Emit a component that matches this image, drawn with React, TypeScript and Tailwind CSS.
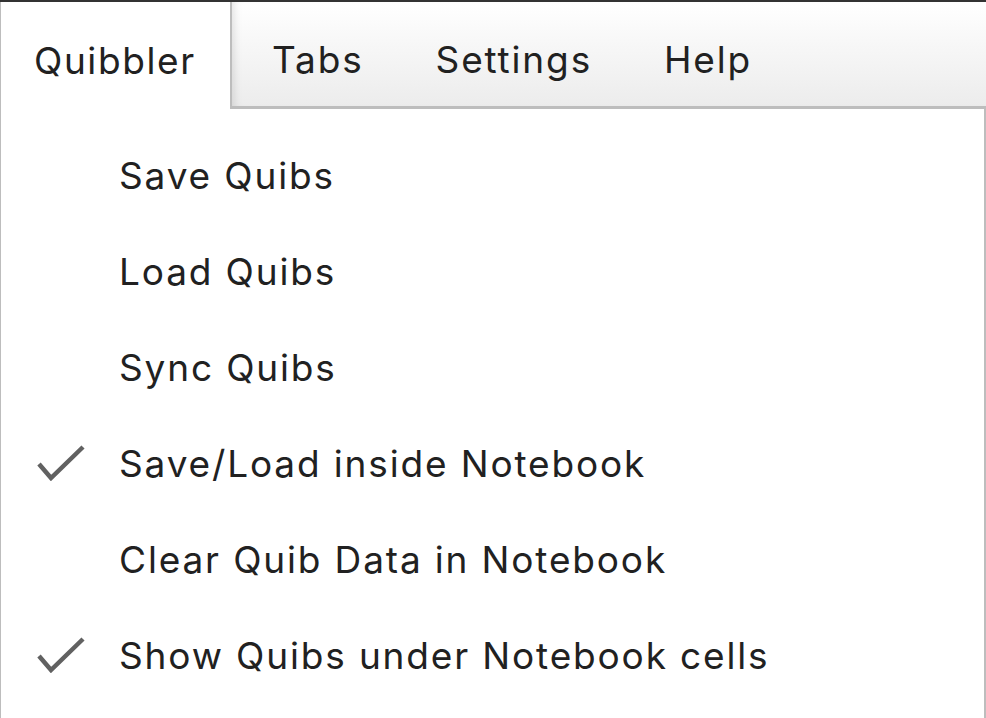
import { useState } from 'react'

type Item = { label: string; checked?: boolean }

const menus = ['Quibbler', 'Tabs', 'Settings', 'Help']

const items: Item[] = [
  { label: 'Save Quibs' },
  { label: 'Load Quibs' },
  { label: 'Sync Quibs' },
  { label: 'Save/Load inside Notebook', checked: true },
  { label: 'Clear Quib Data in Notebook' },
  { label: 'Show Quibs under Notebook cells', checked: true },
]

function Check() {
  return (
    <svg width="48" height="36" viewBox="0 0 48 36" className="block">
      <polyline points="2,19 14,33 46,2" fill="none" stroke="#616161" strokeWidth="4.5" strokeLinejoin="miter" />
    </svg>
  )
}

export default function App() {
  const [active] = useState('Quibbler')

  return (
    <div className="w-[986px] h-[718px] overflow-hidden bg-white border-t-2 border-[#333] text-[#212121] font-['Inter','Liberation_Sans',sans-serif] tracking-[1.85px]">
      {/* menu bar */}
      <div className="flex h-[107px]">
        {menus.map(m =>
          m === active ? (
            <div key={m} className="w-[230px] shrink-0 bg-white border-l border-[#bdbdbd] flex items-center pl-[33px] pt-[10px] text-[37px] leading-none tracking-[1.6px]">
              {m}
            </div>
          ) : null
        )}
        <div className="flex-1 flex items-center pt-[10px] border-l-2 border-b-[3px] border-[#bdbdbd] bg-gradient-to-b from-white to-[#ececec] shadow-[inset_8px_0_8px_-6px_rgba(0,0,0,0.12)]">
          {menus.filter(m => m !== active).map(m => (
            <div key={m} className="px-[36px] text-[37px] leading-none first:pl-[40px]">
              {m}
            </div>
          ))}
        </div>
      </div>

      {/* dropdown */}
      <div className="h-full border-l border-r-2 border-[#bdbdbd] pt-[18px]">
        {items.map(it => (
          <div key={it.label} className="flex items-center h-[96px]">
            <div className="w-[118px] shrink-0 pl-[36px]">
              {it.checked && <Check />}
            </div>
            <span className="text-[37px] leading-none">{it.label}</span>
          </div>
        ))}
      </div>
    </div>
  )
}
